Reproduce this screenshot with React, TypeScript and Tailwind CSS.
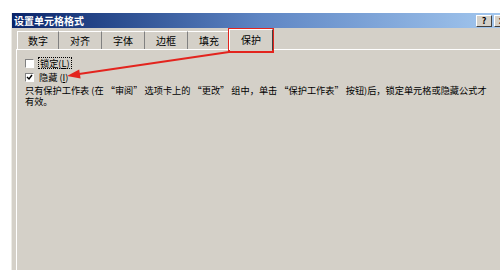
import React from 'react';

const tabs = ['数字', '对齐', '字体', '边框', '填充'];

function TitleButton({ children }: { children: React.ReactNode }) {
  return (
    <div className="flex h-[12px] w-[16px] items-center justify-center border border-t-white border-l-white border-r-[#404040] border-b-[#404040] bg-[#d4d0c8] text-[9px] font-bold leading-none text-black">
      {children}
    </div>
  );
}

function Checkbox({ checked }: { checked?: boolean }) {
  return (
    <div className="relative h-[9px] w-[9px] border border-t-[#808080] border-l-[#808080] border-r-white border-b-white bg-white">
      {checked && (
        <svg className="absolute left-0 top-0" width="7" height="7" viewBox="0 0 7 7">
          <path d="M1 3 L3 5 L6 1" fill="none" stroke="#000" strokeWidth="1.4" />
        </svg>
      )}
    </div>
  );
}

export default function App() {
  return (
    <div className="relative h-[270px] w-[500px] overflow-hidden bg-white pl-[11px] pt-[13px] font-['Noto_Sans_CJK_SC',sans-serif]">
      <div className="h-[300px] w-[501px] border-l border-[#ecebe6] bg-[#d4d0c8]">
        {/* Title bar */}
        <div className="flex h-[15px] items-center bg-linear-to-r from-[#0a246a] via-[#5f86c4] to-[#a6caf0] pl-[2px] pr-[2px]">
          <span className="text-[10px] font-bold leading-none text-white">设置单元格格式</span>
          <div className="ml-auto flex gap-[2px]">
            <TitleButton>?</TitleButton>
            <TitleButton>×</TitleButton>
          </div>
        </div>

        {/* Tabs */}
        <div className="flex h-[21px] items-end pl-[5px] pt-[1px] text-[10px] leading-none text-black">
          {tabs.map((t, i) => (
            <div
              key={t}
              className={`flex h-[18px] items-center justify-center border-t border-t-white border-r border-r-[#808080] ${i === 0 ? 'w-[42px] border-l border-l-white' : 'w-[43px]'}`}
            >
              {t}
            </div>
          ))}
          <div className="relative z-10 -ml-[2px] -mb-[1px] flex h-[21px] w-[44px] items-center justify-center border-t border-l border-t-white border-l-white border-r border-r-[#404040] bg-[#d4d0c8]">
            保护
          </div>
        </div>

        {/* Panel */}
        <div className="ml-[4px] h-[260px] border-t border-l border-white pl-[8px] pt-[7px] text-[9.2px] leading-[10.5px] text-black">
          <div className="flex h-[12px] items-center gap-[4px]">
            <Checkbox />
            <span className="border border-dotted border-black px-[1px] leading-[10px]">
              锁定(<span className="underline">L</span>)
            </span>
          </div>
          <div className="mt-[2px] flex h-[12px] items-center gap-[5px]">
            <Checkbox checked />
            <span className="leading-[10px]">
              隐藏 (<span className="underline">I</span>)
            </span>
          </div>
          <p className="mt-[2px] whitespace-nowrap">
            只有保护工作表 (在 “审阅” 选项卡上的 “更改” 组中，单击 “保护工作表” 按钮)后，锁定单元格或隐藏公式才
            <br />
            有效。
          </p>
        </div>
      </div>

      {/* Annotation: red box + arrow */}
      <div className="absolute left-[228px] top-[28px] h-[25px] w-[46px] border-2 border-[#e3241e]" />
      <svg className="absolute left-0 top-0" width="500" height="270" viewBox="0 0 500 270">
        <line x1="79" y1="74" x2="229" y2="52" stroke="#e3241e" strokeWidth="2" />
        <polygon points="67,76 80.6,78.5 79.2,69.6" fill="#e3241e" />
      </svg>
    </div>
  );
}
